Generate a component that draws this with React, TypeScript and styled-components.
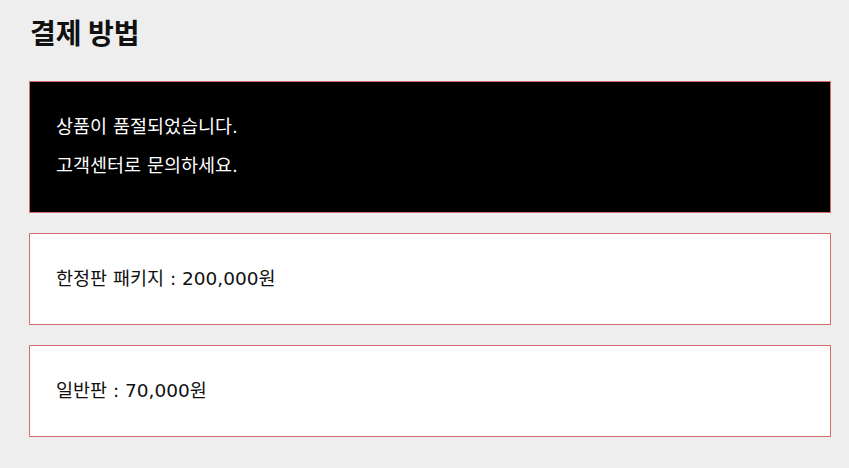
import React from "react";
import styled, { createGlobalStyle } from "styled-components";

const Global = createGlobalStyle`
  html, body { margin: 0; padding: 0; background: #eeeeee; }
  body { font-family: "DejaVu Sans", "Noto Sans CJK KR", sans-serif; }
`;

const Page = styled.div`
  width: 802px;
  padding: 12px 0 30px 29px;
  display: flex;
  flex-direction: column;
`;

const Title = styled.h2`
  margin: 0 0 0 1px;
  font-family: "Noto Sans CJK KR", sans-serif;
  font-size: 28px;
  font-weight: 700;
  line-height: 40px;
  color: #111;
`;

const List = styled.div`
  margin-top: 29px;
  display: flex;
  flex-direction: column;
  gap: 20px;
`;

const Card = styled.div<{ $dark?: boolean }>`
  border: 1px solid #d66d6d;
  background: ${(p) => (p.$dark ? "#000" : "#fff")};
  color: ${(p) => (p.$dark ? "#fff" : "#111")};
  padding: 34px 26px ${(p) => (p.$dark ? "36px" : "35px")};
  display: flex;
  flex-direction: column;
  gap: 18px;
`;

const Line = styled.p`
  margin: 0;
  font-size: 18.5px;
  line-height: 21px;
`;

export default function App() {
  return (
    <>
      <Global />
      <Page>
        <Title>결제 방법</Title>
        <List>
          <Card $dark>
            <Line>상품이 품절되었습니다.</Line>
            <Line>고객센터로 문의하세요.</Line>
          </Card>
          <Card>
            <Line>한정판 패키지 : 200,000원</Line>
          </Card>
          <Card>
            <Line>일반판 : 70,000원</Line>
          </Card>
        </List>
      </Page>
    </>
  );
}
